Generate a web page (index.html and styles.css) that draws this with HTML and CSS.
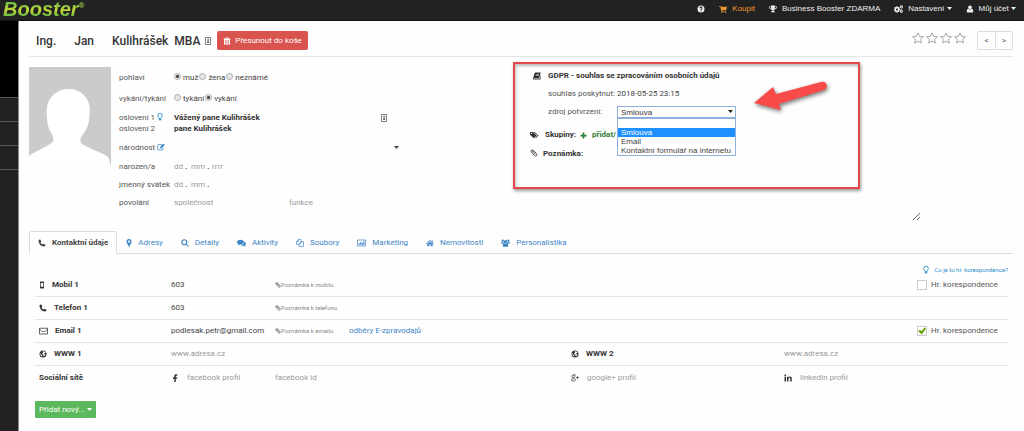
FILE: index.html
```html
<!DOCTYPE html>
<html lang="cs">
<head>
<meta charset="utf-8">
<title>Booster – Kulihrášek</title>
<link rel="stylesheet" href="styles.css">
</head>
<body>
<svg class="sprite" aria-hidden="true">
  <symbol id="help" viewBox="0 0 16 16"><path fill-rule="evenodd" d="M8 1a7 7 0 1 0 0 14A7 7 0 0 0 8 1zM7 11h2v2H7zM9 10H7c0-2.500 2-2.500 2-4 0-1.300-2-1.300-2.200.2L4.800 6C5 2 11 2 11 6c0 2-2 2.300-2 4z"/></symbol>
  <symbol id="cart" viewBox="0 0 16 16"><path d="M0 2h3.500l.4 1.500H16l-1.500 6.500-9 1 .3 1H14v1.200H4.500L2.700 3.500H0z"/><circle cx="6" cy="14.500" r="1.400"/><circle cx="13" cy="14.500" r="1.400"/></symbol>
  <symbol id="trophy" viewBox="0 0 16 16"><path fill-rule="evenodd" d="M4 1h8v2h4c0 4-2 5.500-5 6-1 1-2 1.500-2 3 1.500 0 3 .6 3 2.500H4C4 12.600 5.500 12 7 12c0-1.500-1-2-2-3-3-.5-5-2-5-6h4zM1.300 4.200C1.500 6 2.500 7 4.500 7.600L4 4.200zm13.400 0H12l-.5 3.400c2-.6 3-1.600 3.200-3.400z"/></symbol>
  <symbol id="cogs" viewBox="0 0 18 16"><path fill-rule="evenodd" d="M5 2.500h2l.4 1.700 1 .4 1.500-1 1.400 1.500-.9 1.400.4 1 1.700.4v2l-1.700.4-.4 1 .9 1.500-1.400 1.400-1.500-.9-1 .4L7 15.500H5l-.4-1.800-1-.4-1.500.9-1.400-1.400.9-1.500-.4-1L0 9.900v-2l1.200-.4.400-1-.9-1.400 1.400-1.500 1.500 1 1-.4zM6 6.800A2.100 2.100 0 1 0 6 11a2.100 2.100 0 0 0 0-4.200z"/><path fill-rule="evenodd" d="M14.500 0l1 1.200 1.500-.2.300 1.500L18 3.700l-.7 1 .2 1.500-1.500.2-1.200 1-1.200-1-1.500-.2.200-1.500-.8-1 .8-1.200.2-1.500 1.300.2zm.2 2.700a1 1 0 1 0 0 2.100 1 1 0 0 0 0-2.100zM14.500 8.500l1 1.200 1.500-.2.300 1.500.7 1.200-.7 1 .2 1.500-1.500.2-1.200 1-1.200-1-1.500-.2.200-1.500-.8-1 .8-1.200.2-1.500 1.300.2zm.2 2.700a1 1 0 1 0 0 2.100 1 1 0 0 0 0-2.100z"/></symbol>
  <symbol id="user" viewBox="0 0 16 16"><circle cx="8" cy="4.500" r="3.700"/><path d="M4.500 7.500C6.500 9.500 9.500 9.500 11.500 7.500c2.500.5 3 3 3 5 0 1.500-1 2.500-2.500 2.500H4c-1.500 0-2.500-1-2.500-2.500 0-2 .5-4.500 3-5z"/></symbol>
  <symbol id="caret" viewBox="0 0 10 6"><path d="M0 0h10L5 6z"/></symbol>
  <symbol id="trash" viewBox="0 0 16 16"><path fill-rule="evenodd" d="M5.500 1h5l.7 2H15v1.500h-1V15H2V4.500H1V3h3.800zM4.800 6v7.500h1.200V6zm2.600 0v7.500h1.200V6zM10 6v7.500h1.200V6zM6.600 2l-.3 1h3.400l-.3-1z"/></symbol>
  <symbol id="card" viewBox="0 0 12 16"><path fill="none" stroke="currentColor" stroke-width="1.500" d="M1 1h10v14H1z"/><path d="M5 3.500h2.500V6H5zM4 7h4.500v1.500H7.300v2h1.200V12H4v-1.500h1.200v-2H4z"/></symbol>
  <symbol id="star" viewBox="0 0 16 16"><path fill="none" stroke="currentColor" stroke-width="1" d="M8 1.200l2.100 4.600 5 .6-3.700 3.400 1 4.900L8 12.200l-4.400 2.500 1-4.900L.9 6.400l5-.6z"/></symbol>
  <symbol id="bulb" viewBox="0 0 12 16"><path fill="none" stroke="currentColor" stroke-width="1.700" d="M4 11C4 8.500 1.300 8 1.300 5.300a4.700 4.700 0 0 1 9.400 0C10.700 8 8 8.500 8 11z"/><path d="M3.500 12h5v1.500h-1V15h-3v-1.500h-1z"/></symbol>
  <symbol id="edit" viewBox="0 0 18 16"><path fill="none" stroke="currentColor" stroke-width="1.600" d="M11 2.500H3.500A2 2 0 0 0 1.500 4.500v8a2 2 0 0 0 2 2h8a2 2 0 0 0 2-2V10"/><path d="M14.500.5l3 3L10 11H7V8z"/></symbol>
  <symbol id="book" viewBox="0 0 16 16"><path fill-rule="evenodd" d="M5 1h10.500L12.500 12.500H3c-1 0-1 1.200 0 1.200h10.500L16 4.500 15 15H2C.5 15-.2 13.500.3 12L3 3C3.400 1.800 4 1 5 1zm1.500 3L6.200 5.200h6L12.500 4zM5.800 6.500l-.3 1.200h6l.3-1.200z"/></symbol>
  <symbol id="tags" viewBox="0 0 18 16"><path fill-rule="evenodd" d="M0 2h6l7 7-5.500 5.500L0 7.500zm3 1.500A1.300 1.300 0 1 0 3 6a1.300 1.300 0 0 0 0-2.500z"/><path d="M7.500 2H9.500l7.500 7-5.500 5.500-1.200-1L14.800 9z"/></symbol>
  <symbol id="clip" viewBox="0 0 16 16"><path fill="none" stroke="currentColor" stroke-width="1.500" d="M12.500 8.500L6 2.500C3.500.5.500 3.500 2.500 6l7 7.500c2.500 2.500 6-.5 4-3.500L7 3.500C5.500 2 3.500 4 5 5.500l5.500 6"/></symbol>
  <symbol id="plus" viewBox="0 0 16 16"><path d="M6 1h4v5h5v4h-5v5H6v-5H1V6h5z"/></symbol>
  <symbol id="phone" viewBox="0 0 16 16"><path d="M1 3.500C1.500 2 3 1 4.500 1.200L6.700 5.200 5 7c1 2 2.200 3.200 4.200 4.200l1.700-1.800 4 2.200C15 13.500 13.500 15 12 15 6 15 1 9 1 3.500z"/></symbol>
  <symbol id="pin" viewBox="0 0 12 16"><path fill-rule="evenodd" d="M6 0a5 5 0 0 1 5 5c0 1.500-.5 2.500-1 3.500L6 16 2 8.500C1.500 7.500 1 6.500 1 5a5 5 0 0 1 5-5zm0 2.800a2.300 2.300 0 1 0 0 4.600 2.300 2.300 0 0 0 0-4.600z"/></symbol>
  <symbol id="search" viewBox="0 0 16 16"><circle cx="6.500" cy="6.500" r="5" fill="none" stroke="currentColor" stroke-width="2.400"/><path d="M9.500 11L11 9.500l4.800 4.800-1.500 1.500z"/></symbol>
  <symbol id="chat" viewBox="0 0 18 16"><path d="M7 1.500c4 0 7 2 7 4.700S11 11 7 11l-1.500-.1C4.500 12 3 12.500 1 12.500c1-.8 1.500-1.500 1.500-2.500C1 9 0 7.800 0 6.200 0 3.500 3 1.500 7 1.500z"/><path d="M15.200 5c1.800 1 2.800 2.500 2.800 4 0 1.400-.8 2.600-2 3.500 0 1 .5 1.600 1.300 2.500-2 0-3.300-.6-4.300-1.700-2.500.3-5-.2-6.500-1.300 5 0 9-2.500 8.700-7z"/></symbol>
  <symbol id="copy" viewBox="0 0 16 16"><path fill="none" stroke="currentColor" stroke-width="1.300" d="M6 11H1V5l4-4h5v3M5 1v4H1M6.500 9L10 5h5v10H6.500zM10 5v4H6.500"/></symbol>
  <symbol id="chart" viewBox="0 0 18 16"><path fill="none" stroke="currentColor" stroke-width="1.400" d="M1 2h16v12H1z"/><path d="M3.500 8.500h2V12h-2zM6.500 6h2v6h-2zM9.500 7.500h2V12h-2zM12.500 4h2v8h-2z"/></symbol>
  <symbol id="home" viewBox="0 0 16 16"><path d="M8 2l3.500 3V3h2v3.800L16 9l-1 1-7-6-7 6L0 9zM8 5.300l5.500 4.700v4.500h-4v-4h-3v4h-4V10z"/></symbol>
  <symbol id="users" viewBox="0 0 18 16"><circle cx="3.500" cy="3.500" r="2.300"/><circle cx="14.500" cy="3.500" r="2.300"/><circle cx="9" cy="5.500" r="3.300"/><path d="M0 9c0-2 .5-3 1.500-3 1 .8 2.500.8 3.500.5.200 1 .6 1.700 1 2.500H0zM18 9c0-2-.5-3-1.500-3-1 .8-2.500.8-3.500.5-.2 1-.6 1.700-1 2.500h6zM3.500 13c0-2.500 1-4.500 2.500-4.500 2 1.300 4 1.300 6 0 1.500 0 2.500 2 2.500 4.500 0 1.500-1 2.500-2 2.500h-7c-1 0-2-1-2-2.500z"/></symbol>
  <symbol id="mobile" viewBox="0 0 10 16"><path fill-rule="evenodd" d="M2.500 1h5C8.500 1 9 1.700 9 2.500v11c0 .8-.5 1.500-1.500 1.500h-5C1.500 15 1 14.300 1 13.500v-11C1 1.700 1.500 1 2.500 1zm0 3v7.500h5V4z"/></symbol>
  <symbol id="mail" viewBox="0 0 18 16"><path fill="none" stroke="currentColor" stroke-width="1.500" d="M1 2.500h16v11.500H1zM1 4.500c3 3 6 5 8 5s5-2 8-5"/></symbol>
  <symbol id="globe" viewBox="0 0 16 16"><path fill-rule="evenodd" d="M8 1a7 7 0 1 0 0 14A7 7 0 0 0 8 1zM9 2.500c2 .3 3.500 1.500 4.300 3.200L11 6.500 9.500 8 12 8.500c1 1 .5 2-1 3.500l-1.500.5L8.500 9 6 7l2.500-2L7 3.500zM3 6l1.500 3L7 11.500 6.500 13C4 12.300 2.500 10 2.600 7.500z"/></symbol>
  <symbol id="facebook" viewBox="0 0 10 16"><path d="M9.500.7v2.600H8C6.800 3.300 6.500 3.800 6.500 5v1.500h3l-.4 2.800H6.500V16h-3V9.300H1V6.500h2.500V4.200C3.500 1.800 5 .5 7.200.5c1 0 1.700.1 2.300.2z"/></symbol>
  <symbol id="gplus" viewBox="0 0 18 16"><path fill="none" stroke="currentColor" stroke-width="1.700" d="M10.500 1H6.500C3.500 1 2 2.600 2 4.300 2 6 3.300 7.300 5.300 7.300S8.800 6 8.500 4 7 1.300 6 1.300M6 7.500c0 1.500 4 2 4 4.500 0 2-2 3-4.500 3S1 14 1 12.300 3 9.500 6.500 9.500M14.500 4v6M11.500 7h6"/></symbol>
  <symbol id="linkedin" viewBox="0 0 16 16"><path d="M1 5.500h3V15H1zM6 5.500h3v1.300c.7-1 1.700-1.600 3-1.600 2.300 0 3.500 1.500 3.500 4.300V15h-3v-5c0-1.500-.5-2.300-1.600-2.300S9 8.500 9 10v5H6z"/><circle cx="2.500" cy="2.700" r="1.800"/></symbol>
  <symbol id="check" viewBox="0 0 16 16"><path d="M0 8l4-2.500 3 3L13 1l3 2L7.500 15z"/></symbol>
</svg>

<header class="topbar">
  <a class="logo" href="#">Booster<sup>®</sup></a>
  <nav class="topnav">
    <a href="#" aria-label="Nápověda"><svg class="icon"><use href="#help"/></svg></a>
    <a class="buy" href="#"><svg class="icon"><use href="#cart"/></svg>Koupit</a>
    <a href="#"><svg class="icon"><use href="#trophy"/></svg>Business Booster ZDARMA</a>
    <a href="#"><svg class="icon wide"><use href="#cogs"/></svg><span>Nastavení <svg class="caret"><use href="#caret"/></svg></span></a>
    <a href="#"><svg class="icon"><use href="#user"/></svg><span>Můj účet <svg class="caret"><use href="#caret"/></svg></span></a>
  </nav>
</header>

<div class="layout">
  <aside class="sidebar"><div class="side-head"></div><div class="side-item"></div><div class="side-item"></div><div class="side-item"></div><div class="side-item last"></div></aside>
  <main class="content">
    <div class="titlebar">
      <h1><span>Ing.</span><span>Jan</span><span class="surname">Kulihrášek</span><span>MBA</span></h1>
      <svg class="cardicon"><use href="#card"/></svg>
      <button class="danger" type="button"><svg class="icon"><use href="#trash"/></svg>Přesunout do koše</button>
      <div class="stars"><svg><use href="#star"/></svg><svg><use href="#star"/></svg><svg><use href="#star"/></svg><svg><use href="#star"/></svg></div>
      <div class="pager"><button type="button">&lt;</button><button type="button">&gt;</button></div>
    </div>

    <div class="profile">
      <svg class="avatar" viewBox="0 0 82 98" aria-hidden="true"><path fill="#cbcbcb" d="M0 0h82v98H0z"/><path fill="#fff" d="M38 22c12-1 22 7 23 20l-1 12c-1 6-4 11-8 16-1 5-1 6 3 8 9 5 18 8 23 11 2 2 3 5 3 9H0v-9c5-4 13-7 21-12 4-2 4-5 2-10-4-5-5-12-5-18-2-14 6-26 20-27z"/></svg>

      <form class="person">
        <div class="line tall"><span class="lbl">pohlaví</span>
          <label><input type="radio" name="sex" checked> muž</label><label><input type="radio" name="sex"> žena</label><label><input type="radio" name="sex"> neznámé</label></div>
        <div class="line tall"><span class="lbl">vykání/tykání</span>
          <label><input type="radio" name="form"> tykání</label><label><input type="radio" name="form" checked> vykání</label></div>
        <div class="greetings">
          <div class="line short"><label class="lbl" for="g1">oslovení 1 <svg class="bulb"><use href="#bulb"/></svg></label><input id="g1" class="strong" value="Vážený pane Kulihrášek"><svg class="cardicon"><use href="#card"/></svg></div>
          <div class="line short"><label class="lbl" for="g2">oslovení 2</label><input id="g2" class="strong" value="pane Kulihrášek"></div>
        </div>
        <div class="line tall"><label class="lbl" for="nat">národnost <svg class="edit"><use href="#edit"/></svg></label><span class="pick"><select id="nat"><option></option></select><svg class="caret"><use href="#caret"/></svg></span></div>
        <div class="line"><label class="lbl" for="bd">narozen/a</label><input id="bd" class="day" placeholder="dd"><b>.</b><input class="month" placeholder="mm" aria-label="měsíc"><b>.</b><input class="month" placeholder="rrrr" aria-label="rok"></div>
        <div class="line"><label class="lbl" for="nd">jmenný svátek</label><input id="nd" class="day" placeholder="dd"><b>.</b><input class="month" placeholder="mm" aria-label="měsíc svátku"><b>.</b></div>
        <div class="line"><label class="lbl" for="job">povolání</label><input id="job" class="job" placeholder="společnost"><input class="job" placeholder="funkce" aria-label="funkce"></div>
      </form>

      <section class="consent">
        <div class="crow"><svg class="icon"><use href="#book"/></svg><strong>GDPR - souhlas se zpracováním osobních údajů</strong></div>
        <div class="crow"><i class="icon"></i><span class="ckey">souhlas poskytnut:</span><span>2018-05-25 23:15</span></div>
        <div class="crow"><i class="icon"></i><label class="ckey" for="src">zdroj potvrzení:</label>
          <div class="combo"><select id="src"><option>Smlouva</option></select><svg class="caret"><use href="#caret"/></svg>
            <ul class="menu"><li></li><li class="on">Smlouva</li><li>Email</li><li>Kontaktní formulář na internetu</li></ul></div></div>
        <div class="crow groups"><svg class="icon wide"><use href="#tags"/></svg><strong>Skupiny:</strong><a href="#"><svg class="icon"><use href="#plus"/></svg>přidat/</a></div>
        <div class="note"><svg class="icon"><use href="#clip"/></svg><label for="note">Poznámka:</label><textarea id="note"></textarea></div>
        <div class="frame"></div>
        <svg class="arrow" viewBox="0 0 78 34" aria-hidden="true"><path fill="#f94a4a" d="M3 21L22 5l3 7 45-12a4 4 0 0 1 3 8L28 22l2 6z"/></svg>
      </section>
    </div>

    <nav class="tabs">
      <a class="active" href="#"><svg class="icon"><use href="#phone"/></svg>Kontaktní údaje</a>
      <a href="#"><svg class="icon slim"><use href="#pin"/></svg>Adresy</a>
      <a href="#"><svg class="icon"><use href="#search"/></svg>Detaily</a>
      <a href="#"><svg class="icon wide"><use href="#chat"/></svg>Aktivity</a>
      <a href="#"><svg class="icon"><use href="#copy"/></svg>Soubory</a>
      <a href="#"><svg class="icon wide"><use href="#chart"/></svg>Marketing</a>
      <a href="#"><svg class="icon"><use href="#home"/></svg>Nemovitosti</a>
      <a href="#"><svg class="icon wide"><use href="#users"/></svg>Personalistika</a>
    </nav>

    <section class="contacts">
      <a class="hint" href="#"><svg class="bulb"><use href="#bulb"/></svg>Co je to hr. korespondence?</a>
      <div class="row"><label class="name" for="mob"><svg class="icon slim"><use href="#mobile"/></svg>Mobil 1</label><input id="mob" value="603"><span class="memo"><svg><use href="#clip"/></svg>Poznámka k mobilu</span><label class="bulk"><input type="checkbox">Hr. korespondence</label></div>
      <div class="row"><label class="name" for="tel"><svg class="icon"><use href="#phone"/></svg>Telefon 1</label><input id="tel" value="603"><span class="memo"><svg><use href="#clip"/></svg>Poznámka k telefonu</span></div>
      <div class="row"><label class="name" for="em"><svg class="icon wide"><use href="#mail"/></svg>Email 1</label><input id="em" value="podlesak.petr@gmail.com"><span class="memo"><svg><use href="#clip"/></svg>Poznámka k emailu</span><a class="link" href="#">odběry E-zpravodajů</a><label class="bulk"><input type="checkbox" checked><svg class="tick"><use href="#check"/></svg>Hr. korespondence</label></div>
      <div class="row"><label class="name" for="w1"><svg class="icon"><use href="#globe"/></svg>WWW 1</label><input id="w1" placeholder="www.adresa.cz"><label class="name fifth" for="w2"><svg class="icon"><use href="#globe"/></svg>WWW 2</label><input id="w2" placeholder="www.adresa.cz"></div>
      <div class="row"><span class="name">Sociální sítě</span>
        <label class="social"><svg class="icon"><use href="#facebook"/></svg><input placeholder="facebook profil" aria-label="facebook profil"></label>
        <input placeholder="facebook id" aria-label="facebook id">
        <label class="social fifth"><svg class="icon"><use href="#gplus"/></svg><input placeholder="google+ profil" aria-label="google+ profil"></label>
        <label class="social last"><svg class="icon"><use href="#linkedin"/></svg><input placeholder="linkedIn profil" aria-label="linkedIn profil"></label></div>
      <button class="add" type="button">Přidat nový... <svg class="caret"><use href="#caret"/></svg></button>
    </section>
  </main>
</div>
</body>
</html>
```
FILE: styles.css
```css
* { box-sizing: border-box; }
body { margin: 0; min-height: 100vh; display: flex; flex-direction: column; background: #fefefe; color: #444; font: 8px/12px Roboto, "Liberation Sans", sans-serif; }
a { color: #3d85c6; text-decoration: none; }
svg { fill: currentColor; flex: none; }
.sprite { display: none; }
input, select, textarea, button { font: inherit; color: inherit; margin: 0; padding: 0; border: 0; background: none; min-width: 0; outline: 0; }
input::placeholder { color: #999; opacity: 1; }
.icon { width: 8px; height: 8px; flex: none; }
.icon.wide { width: 9px; }
.icon.slim { width: 6px; }
.caret { width: 5px; height: 3px; vertical-align: middle; }

.topbar { display: flex; justify-content: space-between; height: 21px; padding: 0 8px 0 3px; background: #222; border-bottom: 1px solid #111; }
.logo { font: italic bold 20px/18px "Liberation Sans", Arial, sans-serif; color: transparent; background: linear-gradient(#7ac043 20%, #c5d938 50%, #6cbb45 80%); background-clip: text; -webkit-background-clip: text; }
.logo sup { font-size: 8px; line-height: 8px; vertical-align: 8px; color: #6a8f3c; }
.topnav { display: flex; align-items: center; gap: 14px; height: 18px; font-family: "Liberation Sans", Arial, sans-serif; }
.topnav a { display: flex; align-items: center; gap: 5px; color: #eee; }
.topnav .buy { color: #f0982f; }

.layout { display: flex; flex: 1; }
.sidebar { width: 19px; flex: none; background: #222; border-right: 1px solid #888; }
.side-head { height: 76px; background: #000; }
.side-item { height: 24px; border-top: 1px solid #555; }
.content { flex: 1; min-width: 0; padding: 0 11px 12px 10px; }

.titlebar { display: flex; align-items: center; height: 36px; padding-top: 4px; border-bottom: 1px solid #e4e4e4; }
h1 { display: flex; margin: 0 5px 0 7px; font-size: 12px; font-weight: 500; line-height: 16px; color: #333; gap: 18px; }
.surname { margin-right: -12px; }
.cardicon { width: 6px; height: 8px; color: #555; }
.danger { display: flex; align-items: center; gap: 4px; height: 19px; margin-left: 6px; padding: 0 6px; border-radius: 2px; background: #d9534f; color: #fff; }
.stars { display: flex; gap: 2px; margin: 0 11px 6px auto; color: #888; }
.stars svg { width: 12px; height: 12px; }
.pager { display: flex; border: 1px solid #ddd; border-radius: 2px; }
.pager button { width: 17px; height: 17px; color: #555; }
.pager button + button { border-left: 1px solid #ddd; }

.profile { display: grid; grid-template-columns: 82px minmax(0, 386fr) minmax(0, 500fr); column-gap: 8px; padding-top: 10px; }
.avatar { width: 82px; height: 98px; }
.line { display: flex; align-items: center; height: 18px; }
.line.tall { height: 21px; }
.line.short { height: 11px; }
.greetings { padding: 3px 0; }
.lbl { width: 55px; flex: none; white-space: nowrap; color: #555; }
.line label + label { margin-left: 1px; }
.line input[type=radio] { appearance: none; width: 7px; height: 7px; border: 1px solid #aaa; border-radius: 50%; background: #e8e8e8; vertical-align: middle; margin: 0 0 2px; }
.line input[type=radio]:checked { background: radial-gradient(#444 35%, #e8e8e8 50%); }
.bulb { width: 6px; height: 8px; color: #2b8fd0; vertical-align: middle; }
.edit { width: 8px; height: 8px; color: #2b7fc4; vertical-align: middle; }
.strong { width: 207px; font-weight: 700; color: #333; }
.pick, .combo { position: relative; }
.pick { width: 226px; height: 12px; }
.pick select, .combo select { appearance: none; width: 100%; height: 100%; }
.pick .caret { position: absolute; right: 1px; top: 4px; }
.day { width: 11px; }
.month { width: 16px; }
.line b { width: 6px; }
.month + b { width: 5px; }
.job { width: 115px; }

.consent { position: relative; padding: 0 92px 0 17px; }
.crow { display: flex; align-items: center; gap: 7px; height: 18px; }
.consent strong, .note label { font-weight: 700; color: #333; }
.consent > .crow > .icon, .note > .icon { color: #333; margin-left: 3px; }
.ckey { width: 62px; white-space: nowrap; color: #555; }
.combo { width: 119px; height: 12px; border: 1px solid #8fb0dd; background: #fff; }
.combo select { padding-left: 3px; line-height: 10px; font-family: "Liberation Sans", Arial, sans-serif; color: #333; }
.combo .caret { position: absolute; right: 2px; top: 3px; color: #222; }
.menu { position: absolute; z-index: 3; left: -1px; right: -1px; top: 11px; margin: 0; padding: 0; list-style: none; border: 1px solid #8fb0dd; background: #fff; font: 8px/9px "Liberation Sans", Arial, sans-serif; white-space: nowrap; }
.menu li { height: 9px; padding-left: 3px; }
.menu .on { background: #1e90ff; color: #fff; }
.groups { height: 28px; gap: 6px; }
.consent > .groups > .icon { margin-left: 0; }
.groups a { display: flex; align-items: center; gap: 5px; margin-left: -2px; font-weight: 700; color: #2e7d32; }
.groups a .icon { width: 7px; height: 7px; }
.note { display: flex; align-items: flex-start; gap: 4px; line-height: 10px; }
.note > .icon { margin: 0 1px 0 0; }
.consent > .note > .icon { margin-left: 0; }
.note textarea { flex: 1; height: 72px; resize: both; }
.frame { position: absolute; left: 0; top: -5px; width: 347px; height: 127px; border: 2px solid #e5484d; box-shadow: 1px 2px 3px #0006, inset 1px 2px 3px #0004; pointer-events: none; }
.arrow { position: absolute; left: 238px; top: 15px; width: 78px; height: 34px; overflow: visible; filter: drop-shadow(1px 2px 2px #0008); pointer-events: none; }

.tabs { display: flex; height: 23px; margin-top: 10px; border-bottom: 1px solid #ddd; }
.tabs a { display: flex; align-items: center; gap: 6px; height: 23px; padding: 0 8px; border: 1px solid transparent; white-space: nowrap; }
.tabs .active { border-color: #ddd #ddd #fefefe; border-radius: 2px 2px 0 0; color: #444; font-weight: 700; background: #fefefe; }

.contacts { padding: 12px 5px 0 6px; }
.hint { display: flex; justify-content: flex-end; align-items: center; gap: 5px; height: 8px; font-size: 6px; color: #2b8fd0; }
.row { display: grid; grid-template-columns: 136fr 104fr 74fr 222fr 213fr 133fr 91fr; align-items: center; height: 23px; border-bottom: 1px solid #e2e2e2; }
.row > * { min-width: 0; white-space: nowrap; }
.row:last-of-type { border-bottom: 0; }
.row input { width: 100%; }
.name { display: flex; align-items: center; gap: 7px; padding-left: 4px; font-weight: 700; color: #333; }
.name.fifth { padding-left: 0; }
.fifth { grid-column: 5; }
.memo { display: flex; align-items: center; font-size: 6px; color: #888; }
.memo svg { width: 6px; height: 6px; color: #444; }
.bulk { position: relative; grid-column: 7; display: flex; align-items: center; gap: 4px; color: #555; }
.row .bulk input { appearance: none; flex: none; width: 10px; height: 10px; border: 1px solid #ccc; background: #fff; }
.tick { position: absolute; left: 1px; top: 2px; width: 8px; height: 8px; color: #6a9f00; }
.social { display: flex; align-items: center; gap: 8px; }
.social .icon { color: #333; }
.add { height: 17px; margin-top: 12px; padding: 0 4px; background: #5cb85c; color: #fff; border-radius: 1px; }
```
